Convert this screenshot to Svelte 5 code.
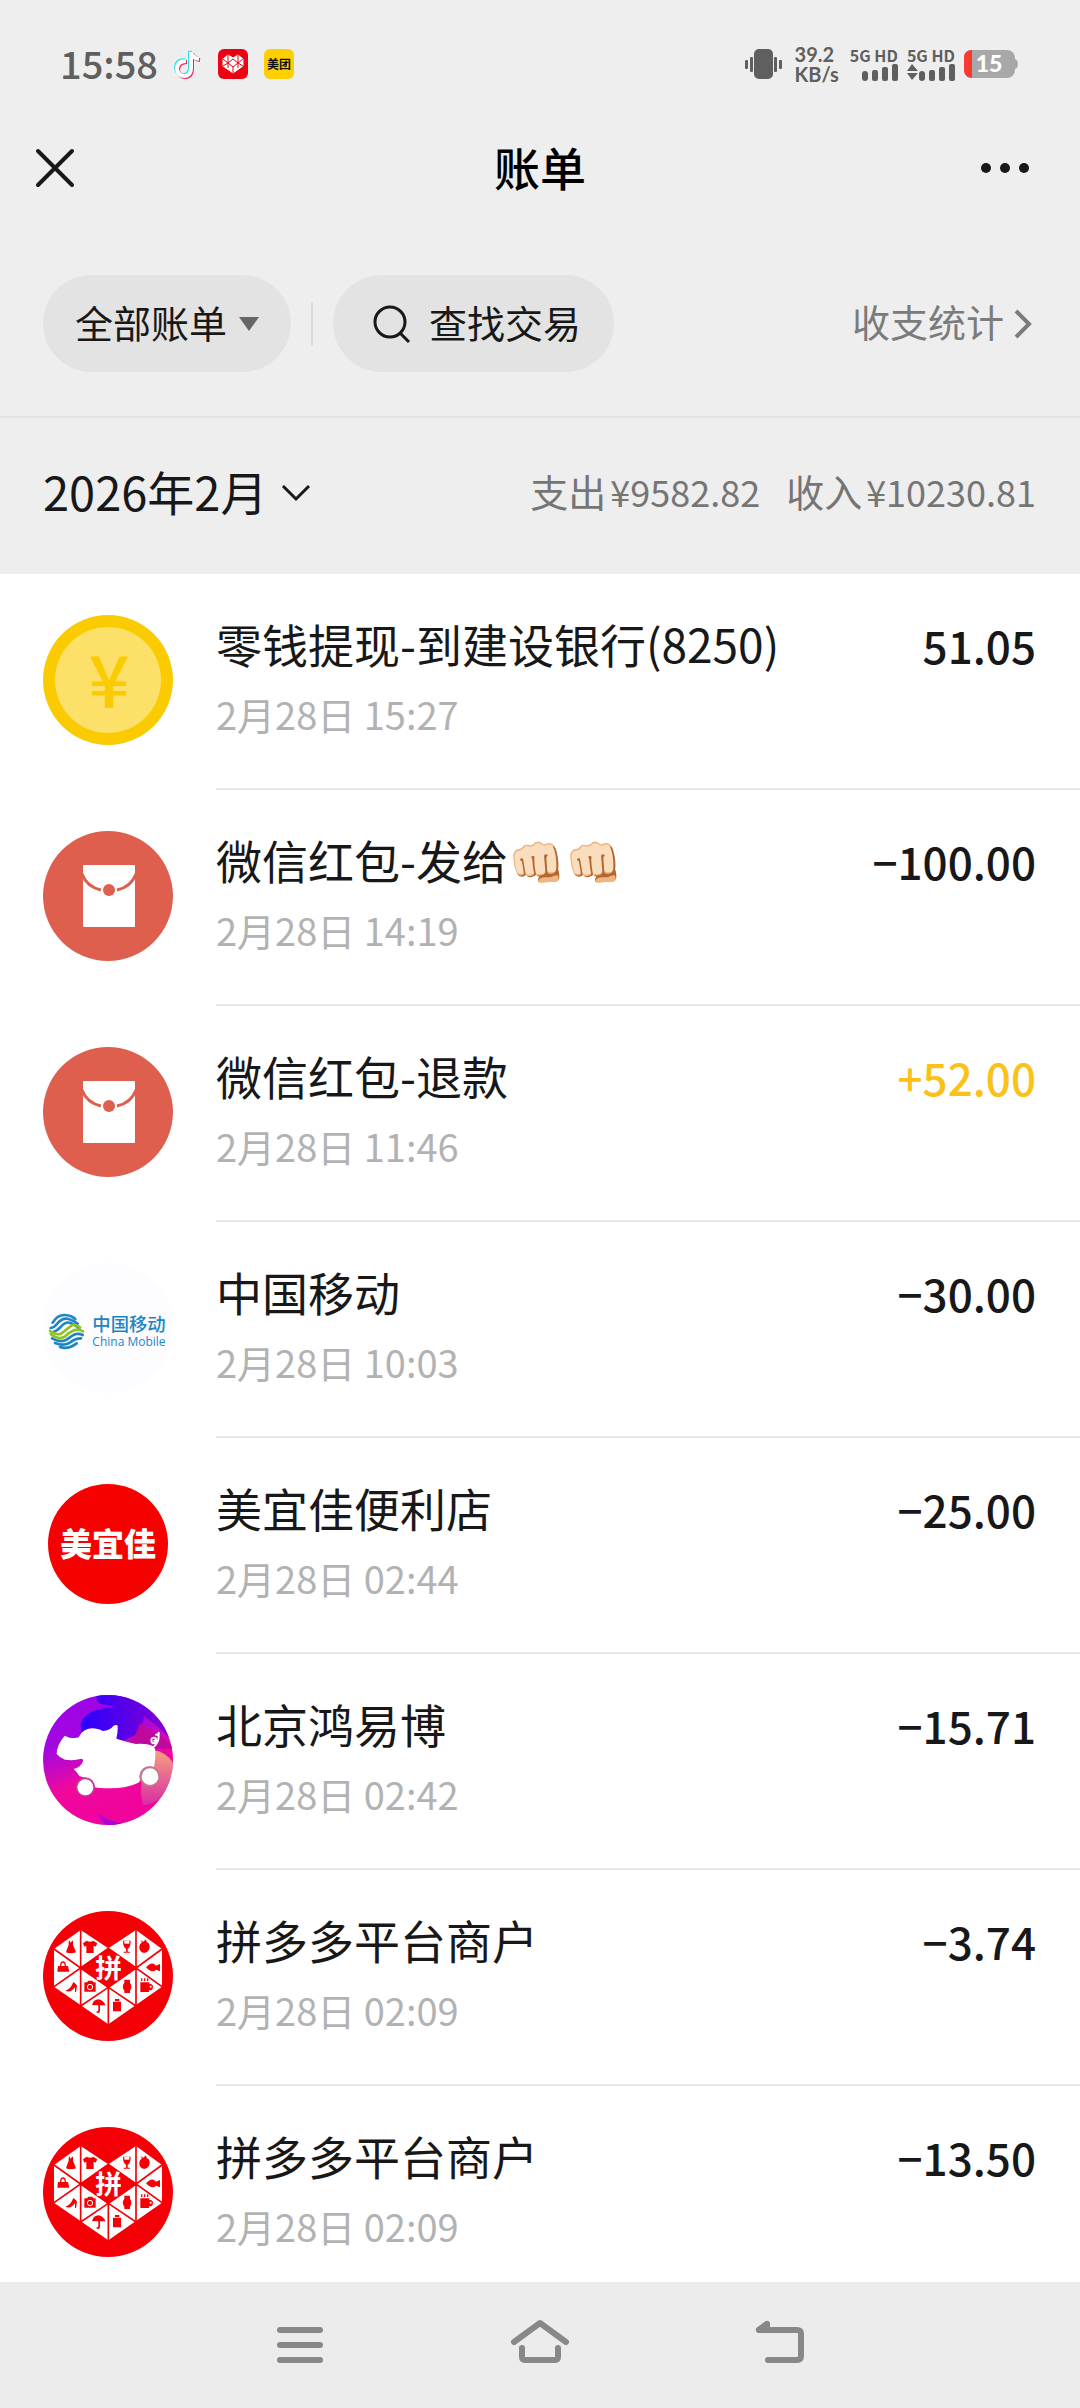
<script lang="ts">
	type Icon = 'coin' | 'packet' | 'mobile' | 'store' | 'pig' | 'pdd';

	interface Bill {
		icon: Icon;
		title: string;
		time: string;
		amount: string;
		income?: boolean;
	}

	const bills: Bill[] = [
		{ icon: 'coin', title: '零钱提现-到建设银行(8250)', time: '2月28日 15:27', amount: '51.05' },
		{ icon: 'packet', title: '微信红包-发给👊🏻👊🏻', time: '2月28日 14:19', amount: '−100.00' },
		{ icon: 'packet', title: '微信红包-退款', time: '2月28日 11:46', amount: '+52.00', income: true },
		{ icon: 'mobile', title: '中国移动', time: '2月28日 10:03', amount: '−30.00' },
		{ icon: 'store', title: '美宜佳便利店', time: '2月28日 02:44', amount: '−25.00' },
		{ icon: 'pig', title: '北京鸿易博', time: '2月28日 02:42', amount: '−15.71' },
		{ icon: 'pdd', title: '拼多多平台商户', time: '2月28日 02:09', amount: '−3.74' },
		{ icon: 'pdd', title: '拼多多平台商户', time: '2月28日 02:09', amount: '−13.50' },
	];
</script>

{#snippet bars()}
	<svg width="36" height="17" viewBox="0 0 36 17" fill="#5f5f5f">
		<rect x="0" y="7" width="6" height="10" rx="3" />
		<rect x="10" y="6" width="6" height="11" rx="2" />
		<rect x="20" y="3" width="6" height="14" rx="2" />
		<rect x="30" y="0" width="6" height="17" rx="2" />
	</svg>
{/snippet}

{#snippet coin()}
	<svg class="avatar" viewBox="0 0 130 130">
		<circle cx="65" cy="65" r="65" fill="#facb00" />
		<circle cx="65" cy="65" r="53" fill="#fde069" />
		<text x="66" y="93" font-size="72" font-weight="500" text-anchor="middle" fill="#facb00">¥</text>
	</svg>
{/snippet}

{#snippet packet()}
	<svg class="avatar" viewBox="0 0 130 130">
		<circle cx="65" cy="65" r="65" fill="#de5f4e" />
		<rect x="40" y="34" width="52" height="62" rx="1" fill="#fff" />
		<path d="M39 43q5 13 19 16M93 43q-5 13-19 16" fill="none" stroke="#de5f4e" stroke-width="3" />
		<circle cx="66" cy="59" r="6" fill="#de5f4e" />
	</svg>
{/snippet}

{#snippet mobile()}
	<svg class="avatar" viewBox="39 39 390 390">
		<circle cx="234" cy="234" r="195" fill="#fdfcfe" />
		<g fill="none" stroke-width="8" stroke-linecap="round">
			<path d="M68 218q14-24 37-23q19 1 31 12" stroke="#1c86c4" />
			<path d="M62 234q10-1 19-12q16-20 35-15q15 4 27 14" stroke="#1c86c4" />
			<path d="M72 245q10-3 20-14q15-18 30-12q12 5 26 15" stroke="#1c86c4" />
			<path d="M60 243q24 16 36 6l28-22q10-6 26 5" stroke="#8fc31f" />
			<path d="M62 252q25 19 42 8q16-14 28-19q12-5 27 3" stroke="#8fc31f" />
			<path d="M66 265q26 14 44 4q18-14 28-17q12-2 20 3" stroke="#1c86c4" />
			<path d="M75 279q24 10 43 0q17-14 35-14" stroke="#1c86c4" />
			<path d="M90 291q25 8 50-11" stroke="#1c86c4" />
		</g>
		<text x="187" y="243" font-size="55" font-weight="500" fill="#1c86c4">中国移动</text>
		<text class="latin" x="187" y="287" font-size="36" font-weight="500" fill="#1c86c4">China Mobile</text>
	</svg>
{/snippet}

{#snippet store()}
	<svg class="avatar" viewBox="0 0 130 130">
		<circle cx="65" cy="65" r="60" fill="#f70000" />
		<text x="65" y="77" font-size="32" font-weight="900" text-anchor="middle" fill="#fff">美宜佳</text>
	</svg>
{/snippet}

{#snippet pig()}
	<svg class="avatar" viewBox="39 45 390 390">
		<defs>
			<linearGradient id="pig-bg" x1="0" y1="0" x2="0.35" y2="1">
				<stop offset="0" stop-color="#9a00e8" />
				<stop offset="0.4" stop-color="#a408e0" />
				<stop offset="0.7" stop-color="#f0089c" />
				<stop offset="1" stop-color="#f0049c" />
			</linearGradient>
			<linearGradient id="pig-blue" x1="0" y1="0" x2="1" y2="0">
				<stop offset="0" stop-color="#2a00ff" />
				<stop offset="1" stop-color="#8c00d0" />
			</linearGradient>
			<linearGradient id="pig-peach" x1="0" y1="0" x2="0" y2="1">
				<stop offset="0" stop-color="#f8a080" />
				<stop offset="1" stop-color="#d82ca4" />
			</linearGradient>
			<clipPath id="pig-clip"><circle cx="234" cy="240" r="195" /></clipPath>
		</defs>
		<g clip-path="url(#pig-clip)">
			<rect x="39" y="45" width="390" height="390" fill="url(#pig-bg)" />
			<path d="M200 45q-4 24 18 28q24 4 42 9q-58-2-90 24q-26 20-14 54l110 30l60-30q14-28 16-52q50 36 90 80V45z" fill="url(#pig-blue)" />
			<path d="M330 130q-8 34-34 56l60 20h80q-40-40-106-76z" fill="#c0089c" />
			<path d="M370 210q40 6 60 40v60q-40 60-90 66q-24-60 30-166z" fill="url(#pig-peach)" />
			<path d="M205 400q26 24 70 30l-30 10q-30-6-40-40z" fill="#a800d8" />
		</g>
		<path d="M104 167l14 6q20 3 28-1q12-26 39-27q20 0 33 8q22-2 32-15q8-5 13-1q1 20-4 39q31 10 59 16q32-2 50 6l7 8q3 24-3 56q-27 0-39 23q1 15-8 23q-35 17-85 17q-35 0-45-3q-3-27-35-30l-12-4q-8-13-17-21q24-5 29-27l-5-4q-25 7-50 3q-17-7-25-17q0-27 24-55z" fill="#fff" />
		<path d="M372 200q14-14 14-30q0-8-8-6M382 182q-14 16-18 0q0-12 12-8q6 6-4 8M386 158v8" fill="none" stroke="#fff" stroke-width="6" stroke-linecap="round" />
		<circle cx="166" cy="321" r="29" fill="#cc3a96" />
		<circle cx="166" cy="322" r="24" fill="#fff" />
		<circle cx="359" cy="289" r="31" fill="#c4788c" />
		<circle cx="360" cy="290" r="25" fill="#fff" />
	</svg>
{/snippet}

{#snippet pdd()}
	<svg class="avatar" viewBox="39 33 390 390">
		<circle cx="234" cy="228" r="195" fill="#f60007" />
		<path d="M72 147l80-57l83 55l83-55l78 57v113l-161 113l-163-113z" fill="#fff" />
		<path d="M235 143l86 61l-86 60l-86-60z" fill="#f60007" />
		<path d="M152 85v240M318 85v240M235 262v115M72 147l80 57l-80 56M152 204l83 58l-83 56M235 145l-83 59M396 147l-78 57l78 56M318 204l-83 58l83 56M235 145l83 59" fill="none" stroke="#f60007" stroke-width="5" />
		<text x="236" y="235" font-size="80" font-weight="700" text-anchor="middle" fill="#fff">拼</text>
		<g fill="#f60007">
			<path d="M116 122h3l3 7l4-7h3v12l9 23q-16 6-30 0l8-23z" />
			<path d="M170 122q10 6 20 0l12 8l-5 10l-6-3v22h-22v-22l-6 3l-4-10z" />
			<path d="M84 198h30l4 17H82zM90 198q0-14 9-14t9 14h-4q0-10-5-10t-5 10z" />
			<path d="M106 272q16-4 24-26q10 6 11 12l-3 18h-3v-14q-12 18-29 10z" />
			<path d="M163 247h8l4-5h12l3 5h7v28h-34z" />
			<path d="M186 315q4-16 20-17q16 4 20 18h-16v18q-2 7-10 4v-5q5 2 5-2v-15z" />
			<path d="M279 122h23q0 21-9 24v9h7v3h-19v-3h7v-9q-9-4-9-24z" />
			<path d="M331 120l9 5l8-7l2 8q10 4 9 16q-2 14-13 16h-7q-12-5-11-18q0-8 8-13z" />
			<path d="M348 202q18-20 30-5l12-5v22l-12-5q-12 12-30-7z" />
			<path d="M283 239h17v9q8 12 0 24v7h-17v-7q-9-12 0-24z" />
			<path d="M331 247h27v5q10-2 11 8q0 12-12 11v5h-26zM333 235h4v8h-4zM342 235h4v8h-4zM351 235h4v8h-4z" />
			<path d="M255 297h13v6h-13zM249 305h24v29h-24z" />
		</g>
		<circle cx="180" cy="261" r="8" fill="none" stroke="#fff" stroke-width="3" />
		<circle cx="362" cy="260" r="3" fill="#fff" />
		<path d="M283 123h15v8h-15z" fill="#fff" />
	</svg>
{/snippet}

<div class="page">
	<div class="status">
		<div class="status-side">
			<span class="clock">15:58</span>
			<svg width="28" height="30" viewBox="0 0 28 30" fill="none" stroke-width="4">
				<path d="M12 12q-9 0-9 8q1 7 8 7q6-1 6-8V3q1 6 8 7" stroke="#25e5e8" transform="translate(-1 -1)" />
				<path d="M12 12q-9 0-9 8q1 7 8 7q6-1 6-8V3q1 6 8 7" stroke="#f4225a" transform="translate(1 1)" />
				<path d="M12 12q-9 0-9 8q1 7 8 7q6-1 6-8V3q1 6 8 7" stroke="#fff" />
			</svg>
			<svg width="30" height="30" viewBox="0 0 30 30">
				<rect width="30" height="30" rx="6" fill="#ec0012" />
				<path d="M15 24L5 17V10l5-4l5 3l5-3l5 4v7z" fill="#fff" stroke="#fff" stroke-linejoin="round" />
				<path d="M10 6v13M20 6v13M15 18v6M5 10l5 4l-5 3M25 10l-5 4l5 3M10 14l5 4l5-4l-5-4z" fill="none" stroke="#ec0012" stroke-width="1" />
			</svg>
			<svg width="30" height="30" viewBox="0 0 30 30">
				<rect width="30" height="30" rx="6" fill="#ffd000" />
				<text x="15" y="20" font-size="12" font-weight="700" text-anchor="middle" fill="#111">美团</text>
			</svg>
		</div>
		<div class="status-side right">
			<svg class="vibrate" width="37" height="30" viewBox="0 0 37 30" fill="#5f5f5f">
				<rect x="0" y="11" width="3" height="9" rx="1" />
				<rect x="5" y="8" width="3" height="15" rx="1" />
				<rect x="9" y="0" width="19" height="30" rx="5" />
				<rect x="29" y="8" width="3" height="15" rx="1" />
				<rect x="34" y="11" width="3" height="9" rx="1" />
			</svg>
			<span class="speed"><span>39.2</span><span>KB/s</span></span>
			<span class="signal">5G HD {@render bars()}</span>
			<span class="signal">
				5G HD
				<span class="signal-row">
					<svg width="11" height="16" viewBox="0 0 11 16" fill="#5f5f5f"><path d="M0 7l5-7l6 7zM0 9h11l-6 7z" /></svg>
					{@render bars()}
				</span>
			</span>
			<svg width="54" height="28" viewBox="0 0 54 28">
				<rect width="51" height="28" rx="8" fill="#a8a8a8" />
				<path d="M51 9q3 1 3 5t-3 5z" fill="#a8a8a8" />
				<path d="M8 0v28q-8-1-8-8V8q0-8 8-8z" fill="#fa3a30" />
				<text class="lato" x="25" y="22" font-size="23" font-weight="900" text-anchor="middle" fill="#fff">15</text>
			</svg>
		</div>
	</div>

	<header class="navbar">
		<button class="icon-btn" aria-label="关闭">
			<svg width="38" height="38" viewBox="0 0 38 38" stroke="#181818" stroke-width="4" stroke-linecap="round">
				<path d="M2 2l34 34M36 2L2 36" />
			</svg>
		</button>
		<h1>账单</h1>
		<button class="icon-btn more" aria-label="更多">
			<svg width="50" height="12" viewBox="0 0 50 12" fill="#181818">
				<circle cx="6" cy="6" r="5" />
				<circle cx="25" cy="6" r="5" />
				<circle cx="44" cy="6" r="5" />
			</svg>
		</button>
	</header>

	<div class="filters">
		<button class="pill">
			<span class="label">全部账单</span>
			<svg width="20" height="14" viewBox="0 0 20 14"><path d="M0 0h20L10 14z" fill="#666" /></svg>
		</button>
		<span class="split"></span>
		<button class="pill search">
			<svg width="38" height="38" viewBox="0 0 38 38" fill="none" stroke="#181818" stroke-width="3">
				<circle cx="17" cy="17" r="15" />
				<path d="M27 28l9 9" />
			</svg>
			<span class="label">查找交易</span>
		</button>
		<a class="stats" href="#stats">
			<span class="label">收支统计</span>
			<svg width="18" height="30" viewBox="0 0 18 30" fill="none" stroke="#7b7b7b" stroke-width="4">
				<path d="M2 2l13 13L2 28" />
			</svg>
		</a>
	</div>

	<div class="month-bar">
		<button class="month">
			<span class="label">2026年2月</span>
			<svg width="30" height="18" viewBox="0 0 30 18" fill="none" stroke="#181818" stroke-width="3">
				<path d="M2 2l13 13L28 2" />
			</svg>
		</button>
		<div class="totals label">
			<span>支出<b>¥9582.82</b></span>
			<span>收入<b>¥10230.81</b></span>
		</div>
	</div>

	<ul class="bills">
		{#each bills as bill}
			<li class="bill">
				{#if bill.icon === 'coin'}
					{@render coin()}
				{:else if bill.icon === 'packet'}
					{@render packet()}
				{:else if bill.icon === 'mobile'}
					{@render mobile()}
				{:else if bill.icon === 'store'}
					{@render store()}
				{:else if bill.icon === 'pig'}
					{@render pig()}
				{:else}
					{@render pdd()}
				{/if}
				<div class="bill-body">
					<div class="bill-text">
						<span class="bill-title">{bill.title}</span>
						<span class="bill-time">{bill.time}</span>
					</div>
					<span class="amount" class:income={bill.income}>{bill.amount}</span>
				</div>
			</li>
		{/each}
	</ul>

	<nav class="system">
		<button class="icon-btn" aria-label="最近任务">
			<svg width="60" height="46" viewBox="0 0 60 46" stroke="#888" stroke-width="6" stroke-linecap="round">
				<path d="M10 8h40M10 23h40M10 38h40" />
			</svg>
		</button>
		<button class="icon-btn" aria-label="主屏幕">
			<svg width="60" height="46" viewBox="0 0 60 46" fill="none" stroke="#888" stroke-width="6" stroke-linecap="round" stroke-linejoin="round">
				<path d="M4 20L30 1l26 19M12 26v9q0 3 4 3h28q4 0 4-3v-9" />
			</svg>
		</button>
		<button class="icon-btn" aria-label="返回">
			<svg width="60" height="46" viewBox="0 0 60 46" fill="none" stroke="#888" stroke-width="6" stroke-linecap="round" stroke-linejoin="round">
				<path d="M17 2L9 8h38q4 0 4 4v22q0 4-4 4H18" />
				<path d="M9 8h8V2z" fill="#888" />
			</svg>
		</button>
	</nav>
</div>

<style>
	:global(body) {
		margin: 0;
		background: #eee;
	}
	.page {
		display: flex;
		flex-direction: column;
		height: 100vh;
		overflow: hidden;
		background: #eee;
		color: #181818;
		font-family: 'Noto Sans CJK SC', 'Noto Color Emoji', sans-serif;
	}
	svg {
		display: block;
		flex-shrink: 0;
		overflow: visible;
	}
	button {
		display: flex;
		align-items: center;
		border: 0;
		padding: 0;
		background: none;
		color: inherit;
		font-family: inherit;
		cursor: pointer;
	}
	.icon-btn {
		justify-content: center;
	}
	.label {
		padding-bottom: 5px;
	}

	.status {
		display: flex;
		justify-content: space-between;
		align-items: center;
		height: 128px;
		padding: 0 62px 0 60px;
		color: #5f5f5f;
	}
	.status-side {
		display: flex;
		align-items: center;
		gap: 16px;
	}
	.status-side.right {
		gap: 9px;
	}
	.clock {
		padding-bottom: 2px;
		font-size: 38px;
		line-height: 38px;
		font-weight: 500;
	}
	.vibrate {
		margin-right: 4px;
	}
	.speed {
		display: flex;
		flex-direction: column;
		margin-right: 2px;
		font-family: Lato, sans-serif;
		font-size: 20px;
		line-height: 20px;
		font-weight: 700;
	}
	.signal {
		display: flex;
		flex-direction: column;
		align-items: flex-end;
		gap: 1px;
		font-size: 16px;
		line-height: 16px;
		font-weight: 700;
	}
	.signal-row {
		display: flex;
		gap: 1px;
	}

	.navbar {
		display: grid;
		grid-template-columns: 1fr auto 1fr;
		align-items: center;
		height: 80px;
		padding: 0 36px;
	}
	.navbar .icon-btn {
		justify-self: start;
	}
	.navbar .more {
		justify-self: end;
		padding-right: 14px;
	}
	h1 {
		margin: 0;
		padding-bottom: 4px;
		font-size: 46px;
		line-height: 60px;
		font-weight: 500;
		color: #000;
	}

	.filters {
		display: flex;
		align-items: center;
		padding: 67px 48px 44px 43px;
		border-bottom: 2px solid #e4e4e4;
		font-size: 38px;
		line-height: 48px;
	}
	.pill {
		gap: 12px;
		height: 97px;
		padding: 0 32px;
		border-radius: 49px;
		background: #e3e3e3;
		font-size: 38px;
	}
	.search {
		gap: 18px;
		padding: 0 33px 0 40px;
	}
	.split {
		width: 2px;
		height: 44px;
		margin: 0 20px;
		background: #dadada;
	}
	.stats {
		display: flex;
		align-items: center;
		gap: 10px;
		margin-left: auto;
		color: #7b7b7b;
		text-decoration: none;
	}

	.month-bar {
		display: flex;
		justify-content: space-between;
		align-items: center;
		height: 150px;
		padding: 0 44px 6px 43px;
	}
	.month {
		gap: 14px;
		font-size: 47px;
		line-height: 60px;
	}
	.totals {
		display: flex;
		gap: 26px;
		font-size: 38px;
		line-height: 48px;
		color: #757575;
	}
	.totals b {
		margin-left: 4px;
		font-size: 36px;
		font-weight: 400;
	}

	.bills {
		flex: 1;
		min-height: 0;
		margin: 0;
		padding: 0;
		overflow: hidden;
		list-style: none;
		background: #fff;
	}
	.bill {
		display: flex;
		gap: 43px;
		height: 216px;
		padding-left: 43px;
	}
	.avatar {
		width: 130px;
		height: 130px;
		margin-top: 41px;
	}
	.latin {
		font-family: 'Open Sans', sans-serif;
	}
	.lato {
		font-family: Lato, sans-serif;
	}
	.bill-body {
		display: flex;
		flex: 1;
		justify-content: space-between;
		padding: 39px 44px 0 0;
		border-bottom: 2px solid #e6e6e6;
	}
	.bill:last-child .bill-body {
		border-bottom: 0;
	}
	.bill-text {
		display: flex;
		flex-direction: column;
		gap: 17px;
	}
	.bill-title {
		font-size: 46px;
		line-height: 60px;
	}
	.bill-time {
		font-size: 38px;
		line-height: 48px;
		color: #b2b2b2;
	}
	.amount {
		font-size: 44px;
		line-height: 64px;
		font-weight: 500;
	}
	.income {
		color: #fac218;
	}

	.system {
		display: flex;
		justify-content: center;
		align-items: center;
		gap: 180px;
		height: 126px;
		background: #ececec;
	}
</style>
